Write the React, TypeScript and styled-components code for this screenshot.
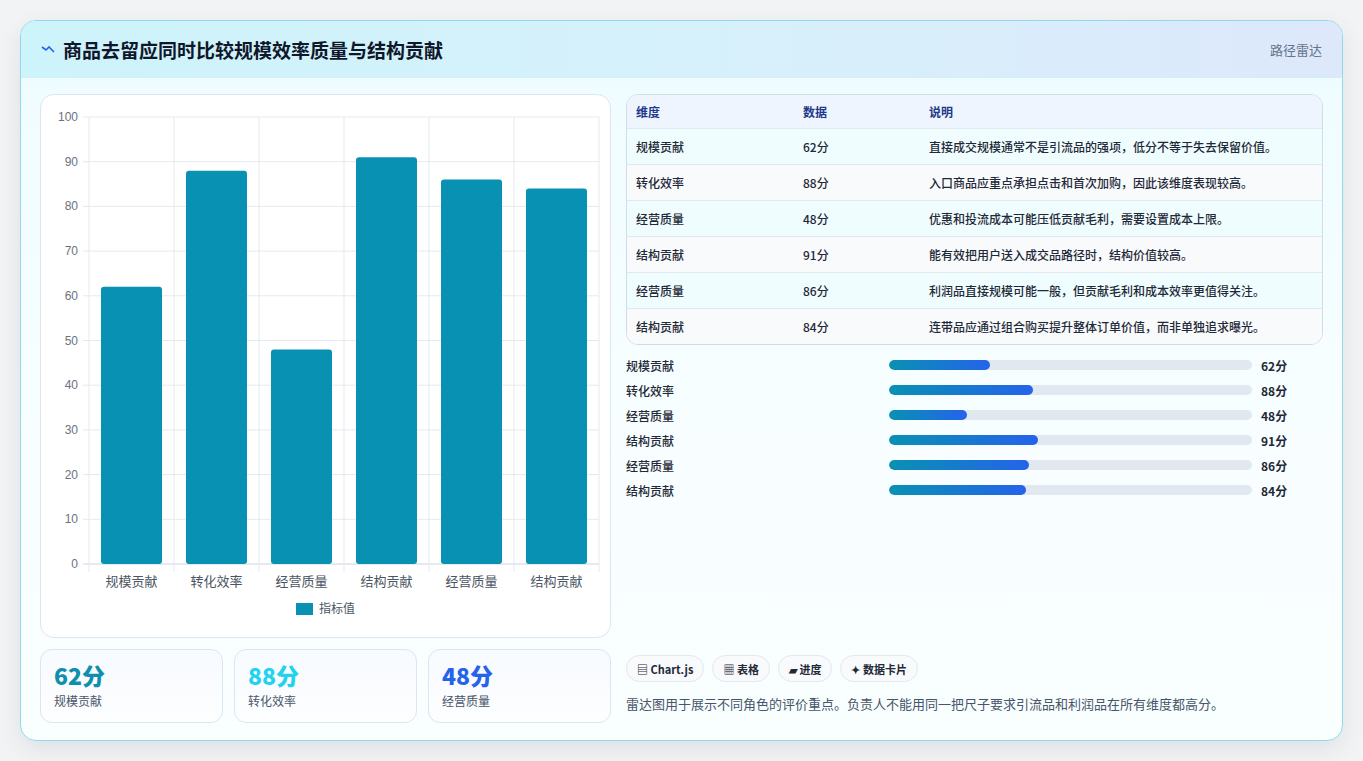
import React from 'react';
import styled, { createGlobalStyle } from 'styled-components';

const Global = createGlobalStyle`
  body { margin: 0; background: #f1f3f5; font-family: "Noto Sans CJK SC", "Noto Sans", sans-serif; }
`;

const Page = styled.div`
  padding: 20px 20px 20px 20px;
  height: 761px;
  box-sizing: border-box;
`;

const Card = styled.div`
  height: 721px;
  box-sizing: border-box;
  border: 1px solid #8fdbe8;
  border-radius: 16px;
  background: linear-gradient(180deg, #eefcff 0%, #f8feff 60%, #f9feff 100%);
  box-shadow: 0 8px 24px rgba(15, 23, 42, 0.08);
  overflow: hidden;
  display: flex;
  flex-direction: column;
`;

const Header = styled.div`
  height: 56px;
  flex: none;
  display: flex;
  align-items: center;
  justify-content: space-between;
  padding: 0 20px;
  background: linear-gradient(90deg, #cdf3fb 0%, #d6f1fb 50%, #dde8fb 100%);
  border-bottom: 1px solid #d4eef5;
`;

const Title = styled.h1`
  margin: 0;
  font-size: 19px;
  font-weight: 700;
  color: #0f172a;
  display: flex;
  align-items: center;
  gap: 8px;
`;

const Tag = styled.span`
  font-size: 13px;
  color: #64748b;
`;

const Body = styled.div`
  flex: 1;
  display: grid;
  grid-template-columns: 571px 1fr;
  gap: 15px;
  padding: 16px 19px 18px 19px;
`;

const Left = styled.div`
  display: flex;
  flex-direction: column;
  gap: 11px;
`;

const ChartCard = styled.div`
  height: 544px;
  box-sizing: border-box;
  border: 1px solid #dbe6ef;
  border-radius: 14px;
  background: #fff;
`;

const Stats = styled.div`
  display: grid;
  grid-template-columns: repeat(3, 1fr);
  gap: 11px;
`;

const Stat = styled.div`
  height: 74px;
  box-sizing: border-box;
  border: 1px solid #dbe6f3;
  border-radius: 12px;
  background: linear-gradient(180deg, #f7faff, #fdfeff);
  padding: 10px 13px;
`;

const StatValue = styled.div<{ $c: string }>`
  font-size: 23px;
  font-weight: 800;
  color: ${p => p.$c};
  line-height: 30px;
`;

const StatLabel = styled.div`
  font-size: 12px;
  color: #475569;
  margin-top: 2px;
`;

const Right = styled.div`
  display: flex;
  flex-direction: column;
`;

const Table = styled.div`
  border: 1px solid #cfdde8;
  border-radius: 12px;
  overflow: hidden;
  background: #fff;
`;

const Row = styled.div<{ $head?: boolean; $alt?: boolean }>`
  display: grid;
  grid-template-columns: 167px 126px 1fr;
  height: ${p => (p.$head ? 33 : 35)}px;
  align-items: center;
  padding-left: 9px;
  font-size: 12px;
  font-weight: ${p => (p.$head ? 600 : 500)};
  color: ${p => (p.$head ? '#1e3a8a' : '#1f2937')};
  background: ${p => (p.$head ? '#eef5ff' : p.$alt ? '#f8fafc' : '#f0fdff')};
  border-top: ${p => (p.$head ? 'none' : '1px solid #e2e8f0')};
`;

const Bars = styled.div`
  display: flex;
  flex-direction: column;
  gap: 7px;
  margin-top: 11px;
`;

const BarRow = styled.div`
  display: grid;
  grid-template-columns: 263px 363px 1fr;
  align-items: center;
  height: 18px;
  font-size: 12px;
  font-weight: 500;
  color: #1f2937;
`;

const Track = styled.div`
  height: 10px;
  border-radius: 5px;
  background: #e2e8f0;
  overflow: hidden;
`;

const Fill = styled.div`
  height: 100%;
  border-radius: 5px;
  background: linear-gradient(90deg, #0891b2, #2563eb);
`;

const BarValue = styled.span`
  padding-left: 9px;
  font-weight: 700;
`;

const Spacer = styled.div`
  flex: 1;
`;

const Chips = styled.div`
  display: flex;
  gap: 8px;
`;

const Chip = styled.span`
  height: 27px;
  box-sizing: border-box;
  padding: 0 10px;
  border: 1px solid #e2e8f0;
  border-radius: 14px;
  background: #f8fafc;
  display: flex;
  align-items: center;
  gap: 4px;
  font-size: 11px;
  font-weight: 600;
  color: #1f2937;
`;

const Note = styled.p`
  margin: 12px 0 10px 0;
  font-size: 13px;
  color: #475569;
`;

const data = [
  { name: '规模贡献', v: 62, d: '直接成交规模通常不是引流品的强项，低分不等于失去保留价值。' },
  { name: '转化效率', v: 88, d: '入口商品应重点承担点击和首次加购，因此该维度表现较高。' },
  { name: '经营质量', v: 48, d: '优惠和投流成本可能压低贡献毛利，需要设置成本上限。' },
  { name: '结构贡献', v: 91, d: '能有效把用户送入成交品路径时，结构价值较高。' },
  { name: '经营质量', v: 86, d: '利润品直接规模可能一般，但贡献毛利和成本效率更值得关注。' },
  { name: '结构贡献', v: 84, d: '连带品应通过组合购买提升整体订单价值，而非单独追求曝光。' },
];

function BarChart() {
  const x0 = 48, x1 = 558, y0 = 22, y1 = 469;
  const cw = (x1 - x0) / 6;
  const ticks = [0, 10, 20, 30, 40, 50, 60, 70, 80, 90, 100];
  const yOf = (v: number) => y1 - ((y1 - y0) * v) / 100;
  return (
    <svg width="569" height="542" style={{ display: 'block' }} fontFamily='"Liberation Sans", "Noto Sans CJK SC", sans-serif'>
      {ticks.map(t => (
        <g key={t}>
          <line x1={x0 - 6} x2={x1} y1={yOf(t)} y2={yOf(t)} stroke={t === 0 ? '#cbd5e1' : '#e5e9ef'} />
          <text x={x0 - 11} y={yOf(t) + 4} fontSize="12" fill="#6b7280" textAnchor="end">{t}</text>
        </g>
      ))}
      {Array.from({ length: 7 }).map((_, i) => (
        <line key={i} x1={x0 + i * cw} x2={x0 + i * cw} y1={y0} y2={y1 + 8} stroke="#e5e9ef" />
      ))}
      {data.map((d, i) => (
        <g key={i}>
          <rect x={x0 + i * cw + 12} y={yOf(d.v)} width={cw - 24} height={y1 - yOf(d.v)} rx="3" fill="#0891b2" />
          <text x={x0 + i * cw + cw / 2} y={y1 + 22} fontSize="13" fill="#4b5563" textAnchor="middle" fontFamily='"Noto Sans CJK SC", sans-serif'>{d.name}</text>
        </g>
      ))}
      <rect x="255" y="508" width="17" height="12" fill="#0891b2" />
      <text x="278" y="518" fontSize="12" fill="#4b5563" fontFamily='"Noto Sans CJK SC", sans-serif'>指标值</text>
    </svg>
  );
}

export default function App() {
  return (
    <Page>
      <Global />
      <Card>
        <Header>
          <Title>
            <svg width="14" height="10" viewBox="0 0 14 10"><path d="M1 3 L5 6 L8 3 L13 8" stroke="#2563eb" strokeWidth="1.6" fill="none" /></svg>
            商品去留应同时比较规模效率质量与结构贡献
          </Title>
          <Tag>路径雷达</Tag>
        </Header>
        <Body>
          <Left>
            <ChartCard><BarChart /></ChartCard>
            <Stats>
              <Stat><StatValue $c="#0e8fad">62分</StatValue><StatLabel>规模贡献</StatLabel></Stat>
              <Stat><StatValue $c="#22d3ee">88分</StatValue><StatLabel>转化效率</StatLabel></Stat>
              <Stat><StatValue $c="#2563eb">48分</StatValue><StatLabel>经营质量</StatLabel></Stat>
            </Stats>
          </Left>
          <Right>
            <Table>
              <Row $head><span>维度</span><span>数据</span><span>说明</span></Row>
              {data.map((d, i) => (
                <Row key={i} $alt={i % 2 === 1}><span>{d.name}</span><span>{d.v}分</span><span>{d.d}</span></Row>
              ))}
            </Table>
            <Bars>
              {data.map((d, i) => (
                <BarRow key={i}>
                  <span>{d.name}</span>
                  <Track><Fill style={{ width: `${d.v * 0.45}%` }} /></Track>
                  <BarValue>{d.v}分</BarValue>
                </BarRow>
              ))}
            </Bars>
            <Spacer />
            <Chips>
              <Chip>▤ Chart.js</Chip>
              <Chip>▦ 表格</Chip>
              <Chip>▰ 进度</Chip>
              <Chip>✦ 数据卡片</Chip>
            </Chips>
            <Note>雷达图用于展示不同角色的评价重点。负责人不能用同一把尺子要求引流品和利润品在所有维度都高分。</Note>
          </Right>
        </Body>
      </Card>
    </Page>
  );
}
